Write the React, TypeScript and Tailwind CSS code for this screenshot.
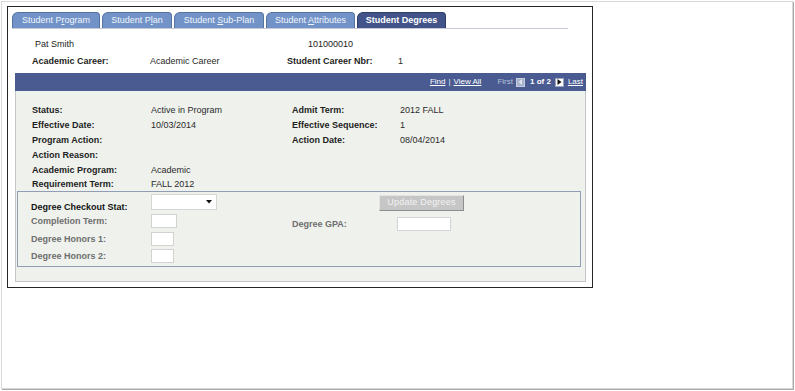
import React from "react";

const Tab = ({ label, width, active, u }: { label: string; width: string; active?: boolean; u?: [string, string, string] }) => (
  <div
    className={
      "h-[16px] flex items-center justify-center rounded-tl-[6px] rounded-tr-[4px] border border-b-0 " +
      width +
      " " +
      (active
        ? "bg-[#42538a] border-[#2f3d6b] text-white font-bold"
        : "bg-[#7193c8] border-[#56729f] text-[#f2f5fb]")
    }
  >
    {u ? (
      <span>
        {u[0]}
        <span className="underline">{u[1]}</span>
        {u[2]}
      </span>
    ) : (
      label
    )}
  </div>
);

const Row = ({ l1, v1, l2, v2, h = "h-[15px]" }: { l1: string; v1?: string; l2?: string; v2?: string; h?: string }) => (
  <div className={"flex items-center leading-[15px] " + h}>
    <span className="w-[119px] font-bold text-[#1e1e1e] shrink-0">{l1}</span>
    <span className="w-[141px] text-[#2a2a2a] shrink-0">{v1 ?? ""}</span>
    <span className="w-[108px] font-bold text-[#1e1e1e] shrink-0">{l2 ?? ""}</span>
    <span className="text-[#2a2a2a]">{v2 ?? ""}</span>
  </div>
);

export default function App() {
  return (
    <div className="w-[795px] h-[391px] bg-white font-['Liberation_Sans',Arial,sans-serif] text-[9px] text-black overflow-hidden">
      <div className="ml-px mt-px w-[792px] h-[388px] border border-[#d8d8d8] shadow-[1px_1px_0_#a9a9a9]">
        <div className="ml-[5px] mt-[4px] w-[586px] h-[282px] border border-[#262626] pl-[4px] pt-[5px]">
          {/* Tabs */}
          <div className="w-[556px] h-[17px] border-b border-[#c6cad2] flex items-end gap-[2px]">
            <Tab label="Student Program" width="w-[88px]" u={["Student P", "r", "ogram"]} />
            <Tab label="Student Plan" width="w-[70px]" u={["Student P", "l", "an"]} />
            <Tab label="Student Sub-Plan" width="w-[90px]" u={["Student ", "S", "ub-Plan"]} />
            <Tab label="Student Attributes" width="w-[89px]" u={["Student ", "A", "ttributes"]} />
            <Tab label="Student Degrees" width="w-[89px]" active />
          </div>

          {/* Header info */}
          <div className="mt-[8px] h-[15px] flex items-center leading-[15px] text-[#222]">
            <span className="w-[296px] pl-[23px] shrink-0">Pat Smith</span>
            <span>101000010</span>
          </div>
          <div className="mt-[2px] h-[15px] flex items-center leading-[15px] pl-[20px]">
            <span className="w-[118px] font-bold text-[#1e1e1e] shrink-0">Academic Career:</span>
            <span className="w-[137px] text-[#2a2a2a] shrink-0">Academic Career</span>
            <span className="w-[111px] font-bold text-[#1e1e1e] shrink-0">Student Career Nbr:</span>
            <span className="text-[#2a2a2a]">1</span>
          </div>

          {/* Blue bar */}
          <div className="mt-[4px] ml-[3px] w-[571px] h-[18px] bg-[#4a5b92] flex items-center justify-end pr-[3px] text-[8px] text-white">
            <span className="underline">Find</span>
            <span className="ml-[3px] text-[#e6e9f2]">|</span>
            <span className="ml-[3px] underline">View All</span>
            <span className="ml-[16px] text-[#b9c2da]">First</span>
            <span className="ml-[3px] w-[9px] h-[9px] bg-[#a7b2cc] border border-[#c6cde0] flex items-center justify-center">
              <svg width="5" height="6" viewBox="0 0 5 6">
                <polygon points="4,0 4,6 0.5,3" fill="#dfe4ef" />
              </svg>
            </span>
            <span className="ml-[5px] font-bold">1 of 2</span>
            <span className="ml-[4px] w-[9px] h-[9px] bg-white border border-[#9aa4bd] flex items-center justify-center">
              <svg width="5" height="6" viewBox="0 0 5 6">
                <polygon points="0.5,0 0.5,6 4.5,3" fill="#111" />
              </svg>
            </span>
            <span className="ml-[4px] underline">Last</span>
          </div>

          {/* Panel */}
          <div className="ml-[3px] w-[571px] h-[191px] bg-[#eff1ed] border border-t-0 border-[#c3c5c3]">
            <div className="pl-[16px] pt-[12px]">
              <Row l1="Status:" v1="Active in Program" l2="Admit Term:" v2="2012 FALL" />
              <Row l1="Effective Date:" v1="10/03/2014" l2="Effective Sequence:" v2="1" />
              <Row l1="Program Action:" l2="Action Date:" v2="08/04/2014" />
              <Row l1="Action Reason:" />
              <Row l1="Academic Program:" v1="Academic" />
              <Row l1="Requirement Term:" v1="FALL 2012" h="h-[13px]" />
            </div>

            {/* Degree box */}
            <div className="ml-px w-[564px] h-[76px] border border-[#909db4] flex">
              <div className="w-[274px] shrink-0 pl-[13px]">
                <div className="mt-[2px] h-[16px] flex">
                  <span className="w-[120px] shrink-0 pt-[8px] leading-[11px] font-bold text-[#151515]">Degree Checkout Stat:</span>
                  <div className="w-[66px] h-[16px] bg-white border border-[#d6d6d6] flex items-center justify-end pr-[4px]">
                    <svg width="6" height="4" viewBox="0 0 6 4">
                      <polygon points="0,0 6,0 3,3.5" fill="#111" />
                    </svg>
                  </div>
                </div>
                <div className="mt-[4px] h-[14px] flex items-center">
                  <span className="w-[120px] shrink-0 leading-[11px] font-bold text-[#6e6e6e]">Completion Term:</span>
                  <div className="w-[26px] h-[14px] bg-white border border-[#d2d2d2]" />
                </div>
                <div className="mt-[4px] h-[14px] flex items-center">
                  <span className="w-[120px] shrink-0 leading-[11px] font-bold text-[#6e6e6e]">Degree Honors 1:</span>
                  <div className="w-[23px] h-[14px] bg-white border border-[#d2d2d2]" />
                </div>
                <div className="mt-[3px] h-[14px] flex items-center">
                  <span className="w-[120px] shrink-0 leading-[11px] font-bold text-[#6e6e6e]">Degree Honors 2:</span>
                  <div className="w-[23px] h-[14px] bg-white border border-[#d2d2d2]" />
                </div>
              </div>
              <div className="flex-1">
                <div className="mt-[3px] ml-[87px] w-[85px] h-[16px] bg-[#c6c6c6] border border-t-[#e4e4e4] border-l-[#e4e4e4] border-r-[#8d8d8d] border-b-[#8d8d8d] flex items-center justify-center text-[#f3f3f3] tracking-[0.2px]">
                  Update Degrees
                </div>
                <div className="mt-[6px] h-[14px] flex items-center">
                  <span className="w-[105px] shrink-0 leading-[11px] font-bold text-[#6e6e6e]">Degree GPA:</span>
                  <div className="w-[54px] h-[14px] bg-white border border-[#d2d2d2]" />
                </div>
              </div>
            </div>
          </div>
        </div>
      </div>
    </div>
  );
}
